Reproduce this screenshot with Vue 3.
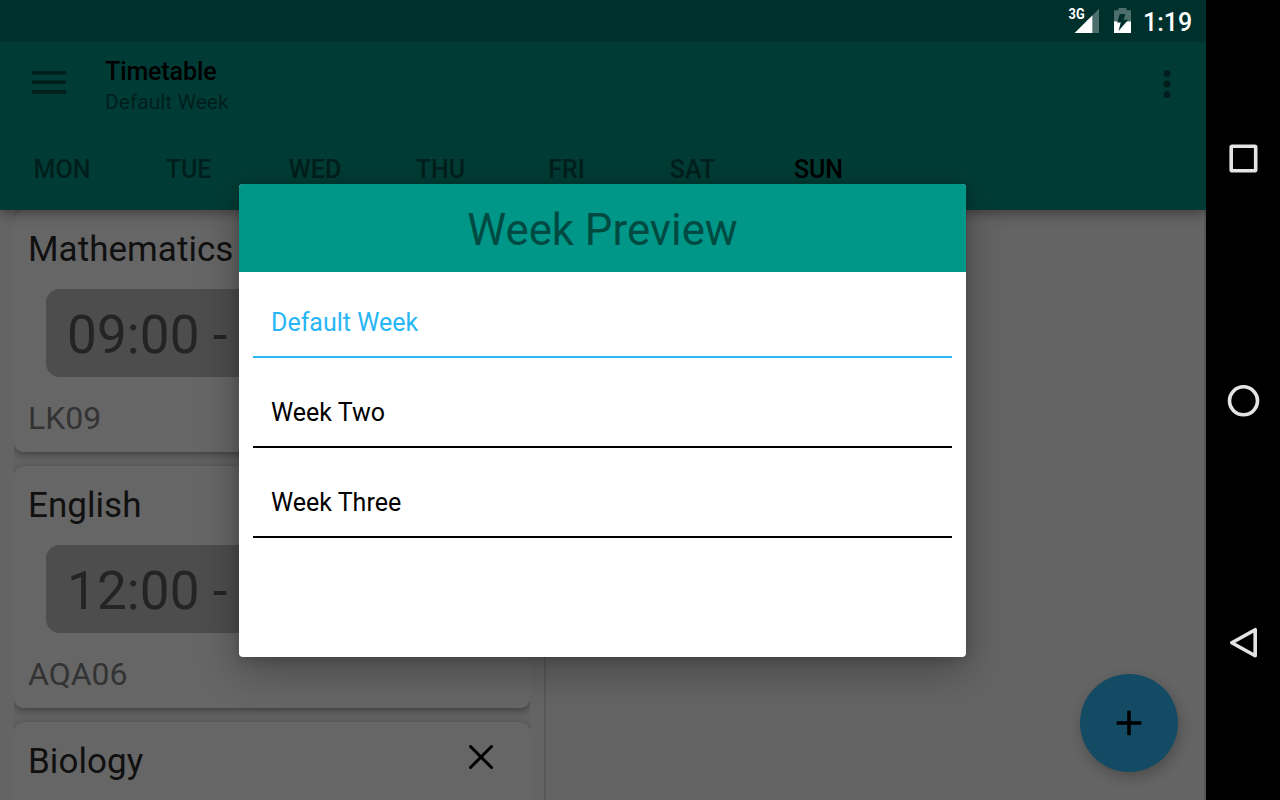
<script setup>
const days = ['MON', 'TUE', 'WED', 'THU', 'FRI', 'SAT', 'SUN']
const lessons = [
  { subject: 'Mathematics', start: '09:00 -', room: 'LK09' },
  { subject: 'English', start: '12:00 -', room: 'AQA06' },
  { subject: 'Biology', start: '', room: '' },
]
const weeks = ['Default Week', 'Week Two', 'Week Three']
const active = 'Default Week'
</script>

<template>
  <div class="device">
    <div class="screen">
      <header class="top">
        <div class="status">
          <svg class="signal" width="34" height="33" viewBox="-2 -8 34 33">
            <path d="M31 0.700V25H6.700Z" fill="#4d6f6b" />
            <path d="M24.300 7.400V25H6.700Z" fill="#fff" />
            <text x="0.600" y="11.300" class="net" textLength="16" lengthAdjust="spacingAndGlyphs">3G</text>
          </svg>
          <svg class="battery" width="17" height="25" viewBox="0 0 17 25">
            <path d="M4.500 0H12.500V2.300H17V13H0V2.300H4.500Z" fill="#4d6f6b" />
            <path d="M0 13.300H17V25H0Z" fill="#fff" />
            <path d="M5.800 6H11.500L9.500 11.800H14.200L4.500 23L6.700 14.500H3.200Z" fill="#00302c" />
          </svg>
          <span class="clock">1:19</span>
        </div>
        <div class="toolbar">
          <svg class="menu" width="34" height="24" viewBox="0 0 34 24">
            <path d="M0 1.800H34M0 11.300H34M0 20.900H34" stroke="#001f1c" stroke-width="3.600" />
          </svg>
          <div class="titles">
            <div class="title">Timetable</div>
            <div class="subtitle">Default Week</div>
          </div>
          <svg class="more" width="8" height="30" viewBox="0 0 8 30">
            <g fill="#001f1c"><circle cx="4" cy="4.400" r="3.500" /><circle cx="4" cy="15" r="3.500" /><circle cx="4" cy="25.500" r="3.500" /></g>
          </svg>
        </div>
        <nav class="tabs">
          <span v-for="d in days" :key="d" :class="['tab', d.toLowerCase()]">{{ d }}</span>
        </nav>
      </header>
      <main class="pages">
        <section class="list">
          <article v-for="l in lessons" :key="l.subject" class="card">
            <div class="head">
              <span class="subject">{{ l.subject }}</span>
              <svg class="close" width="26" height="26" viewBox="0 0 26 26">
                <path d="M2.500 2.500L23.500 23.500M23.500 2.500L2.500 23.500" stroke="#000" stroke-width="3" stroke-linecap="round" />
              </svg>
            </div>
            <div v-if="l.start" class="slot">{{ l.start }}</div>
            <div class="room">{{ l.room }}</div>
          </article>
        </section>
        <section class="blank"></section>
      </main>
      <button class="fab">
        <svg width="26" height="26" viewBox="0 0 26 26">
          <path d="M13 0.700V25.300M0.700 13H25.300" stroke="#000" stroke-width="3.600" />
        </svg>
      </button>
      <div class="dialog">
        <h1>Week Preview</h1>
        <ul>
          <li v-for="w in weeks" :key="w" :class="{ on: w === active }">{{ w }}</li>
        </ul>
      </div>
    </div>
    <aside class="navbar">
      <svg width="36" height="36" viewBox="0 0 36 36"><rect x="6.200" y="6.300" width="24.500" height="24.500" rx="1" fill="none" stroke="#e4e4e4" stroke-width="3.600" /></svg>
      <svg width="36" height="36" viewBox="0 0 36 36"><circle cx="18.500" cy="17.800" r="14" fill="none" stroke="#e4e4e4" stroke-width="3.600" /></svg>
      <svg width="36" height="36" viewBox="0 0 36 36"><path d="M30.200 4.700V30.800L6.800 17.700Z" fill="none" stroke="#e4e4e4" stroke-width="3.600" stroke-linejoin="round" /></svg>
    </aside>
  </div>
</template>

<style scoped>
.device { display: flex; width: 1280px; height: 800px; overflow: hidden; background: #000; font-family: Roboto, "Noto Sans", sans-serif; }
.screen { position: relative; width: 1206px; height: 800px; overflow: hidden; background: #646464; display: flex; flex-direction: column; }
.top { position: relative; z-index: 1; flex: none; height: 210px; background: #003c35; box-shadow: 0 3px 12px rgba(0, 0, 0, .4); }
.status { height: 42px; box-sizing: border-box; background: #00302c; display: flex; align-items: flex-start; justify-content: flex-end; padding: 0 14px 0 0; }
.signal { margin-right: 14px; }
.net { font: 700 14.500px Roboto, sans-serif; fill: #fff; }
.battery { margin: 8px 12px 0 0; }
.clock { margin-top: 8px; color: #fff; font-size: 25px; font-weight: 500; line-height: 29px; width: 49px; white-space: nowrap; }
.toolbar { height: 84px; display: flex; padding: 0 35px 0 32px; }
.menu { margin-top: 29px; }
.titles { margin-left: 39px; flex: 1; }
.title { margin-top: 14px; font-size: 25px; line-height: 31px; height: 30px; font-weight: 500; letter-spacing: -.1px; color: #000; }
.subtitle { font-size: 21px; line-height: 32px; color: #001f1c; }
.more { margin-top: 27px; }
.tabs { display: grid; grid-template-columns: 124px 129px 124px 127px 125px 127px 125px; height: 84px; }
.tab { text-align: center; font-size: 25px; line-height: 87px; font-weight: 500; color: #001f1c; }
.tab.sun { color: #000; }
.pages { display: flex; flex: 1; min-height: 0; }
.list { width: 516px; margin-left: 14px; overflow: hidden; flex: none; }
.card { height: 242px; margin-bottom: 14px; border-radius: 9px; background: #666; box-shadow: 0 3px 8px rgba(0, 0, 0, .34), 0 0 2px rgba(0, 0, 0, .12); overflow: hidden; }
.head { height: 79px; display: flex; justify-content: space-between; padding: 0 36px 0 14px; }
.subject { font-size: 35px; line-height: 79px; letter-spacing: .04px; color: #101010; }
.close { margin-top: 22px; }
.slot { height: 88px; box-sizing: border-box; margin: 0 32px; border-radius: 14px; background: #4d4d4d; color: #242424; font-size: 53px; line-height: 92px; letter-spacing: .12px; padding-left: 21px; }
.room { margin: 21px 0 0 14px; font-size: 32px; line-height: 41px; color: #333; }
.blank { margin-left: 14px; width: 658px; border: solid #585858; border-width: 0 2px; }
.fab { position: absolute; left: 1080px; top: 674px; width: 98px; height: 98px; border: 0; padding: 0; border-radius: 50%; background: #124b63; display: flex; align-items: center; justify-content: center; box-shadow: 2px 5px 13px rgba(0, 0, 0, .24); }
.dialog { position: absolute; z-index: 2; left: 239px; top: 184px; width: 727px; height: 473px; border-radius: 4px; background: #fff; overflow: hidden; box-shadow: 0 12px 42px rgba(0, 0, 0, .32), 0 2px 10px rgba(0, 0, 0, .15); }
h1 { margin: 0; height: 88px; background: #009688; color: #004a42; font-size: 43.750px; font-weight: 400; line-height: 92px; text-align: center; }
ul { list-style: none; margin: 0; padding: 0 14px; }
li { box-sizing: border-box; height: 90px; padding: 16px 0 0 18px; border-bottom: 2px solid #000; font-size: 25px; line-height: 77px; color: #000; }
li:first-child { height: 86px; padding-top: 12px; }
li.on { color: #29b6f6; border-color: #29b6f6; }
.navbar { width: 74px; height: 800px; box-sizing: border-box; padding: 140px 0 139px; display: flex; flex-direction: column; align-items: center; justify-content: space-between; }
</style>
